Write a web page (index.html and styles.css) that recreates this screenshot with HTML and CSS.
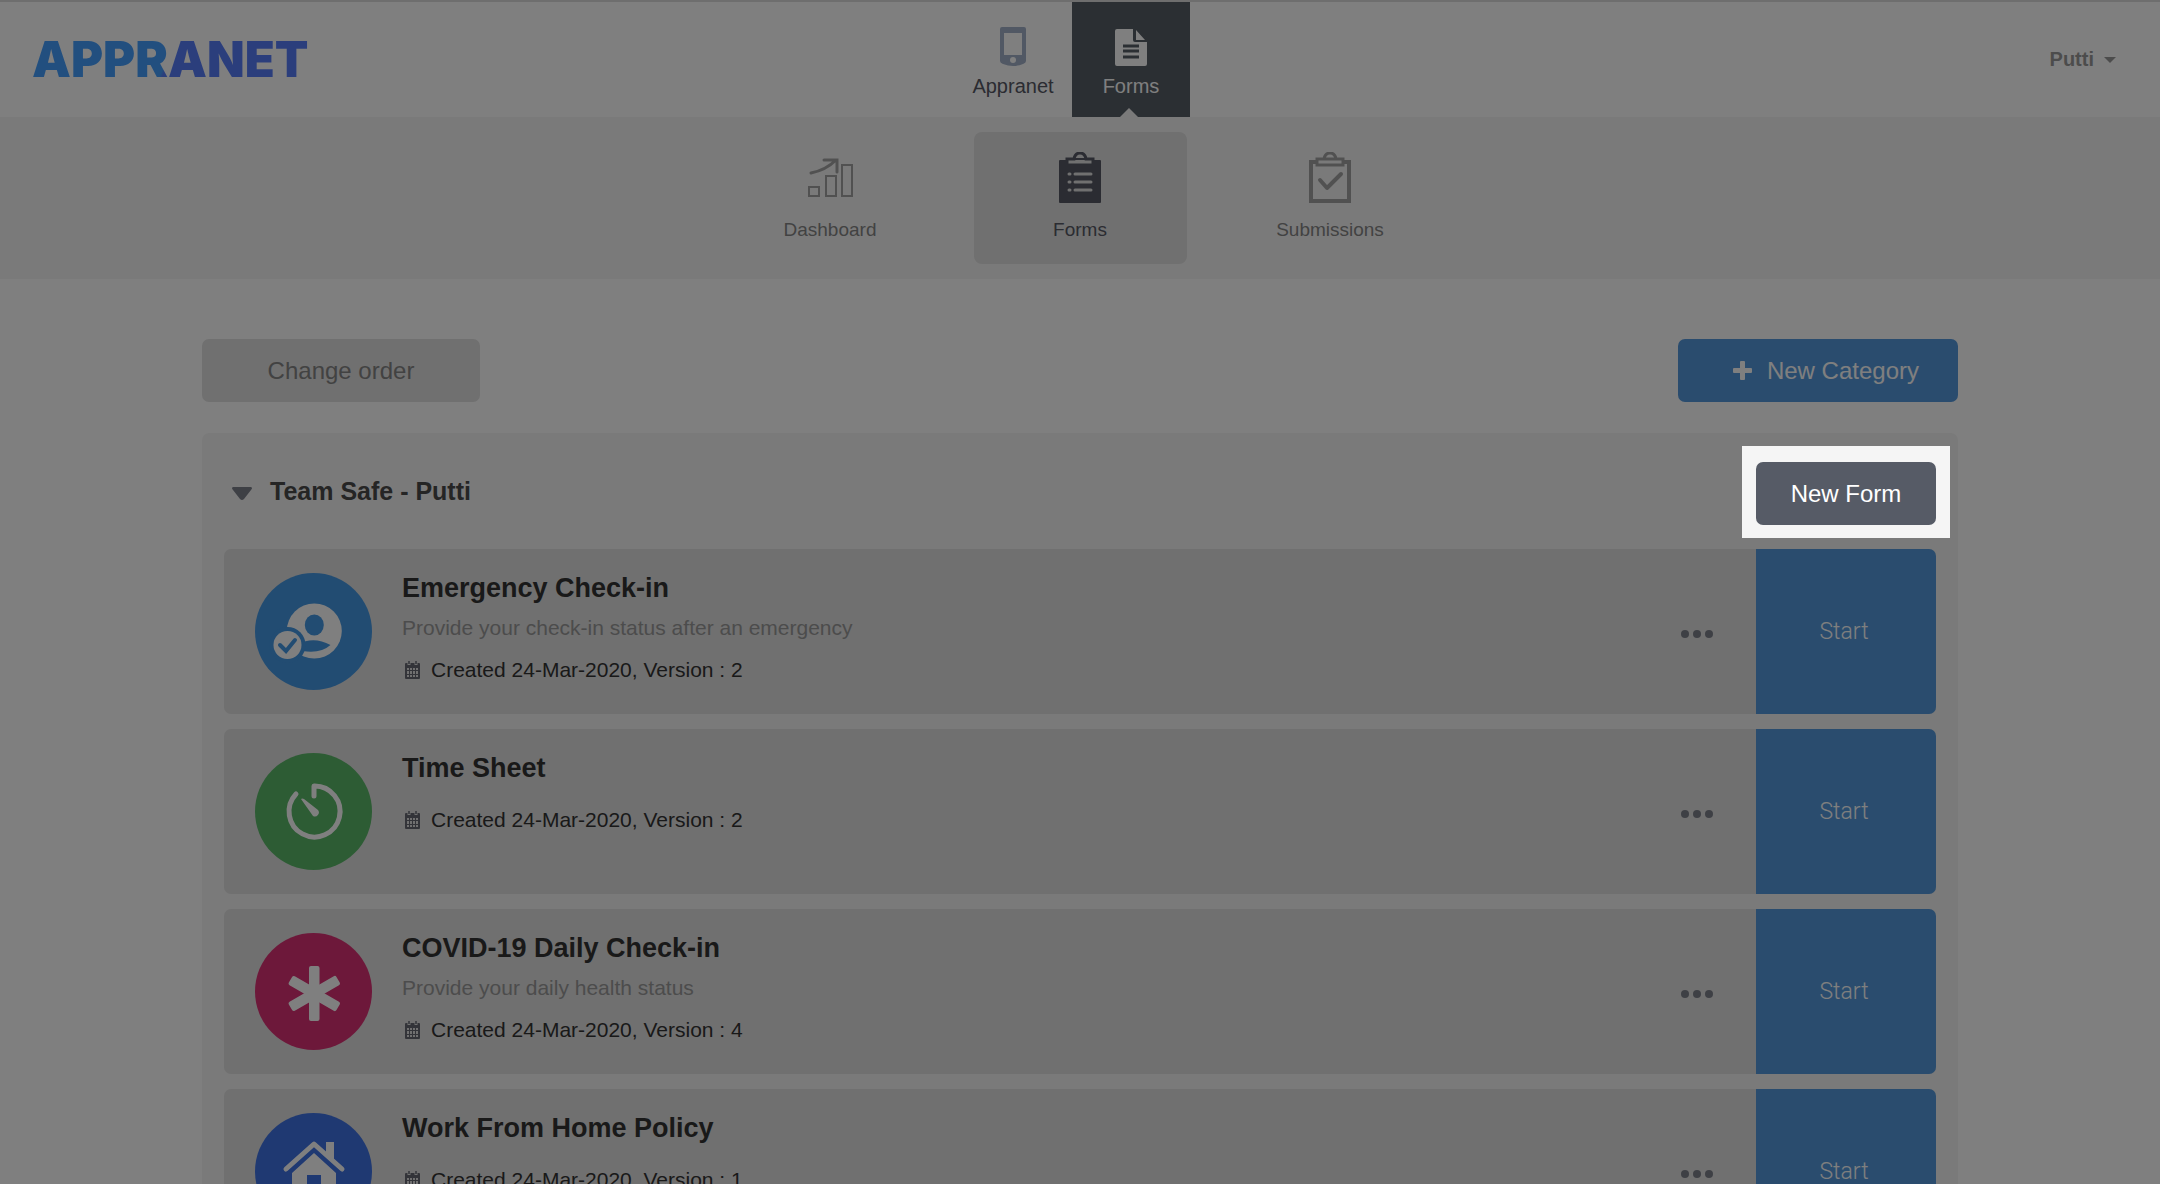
FILE: index.html
```html
<!DOCTYPE html>
<html lang="en">
<head>
    <meta charset="UTF-8">
    <meta name="viewport" content="width=device-width, initial-scale=1.0">
    <title>Appranet - Forms</title>
    <link rel="stylesheet" href="styles.css">
</head>
<body>
    <!-- shared icons -->
    <svg class="sprite" width="0" height="0">
        <symbol id="calendar" viewBox="0 0 15 18">
            <path fill="currentColor" fill-rule="evenodd" d="M1 2h13q1 0 1 1v14q0 1-1 1H1q-1 0-1-1V3q0-1 1-1zM2 7v2h2V7zm3 0v2h2V7zm3 0v2h2V7zm3 0v2h2V7zM2 10v3h2v-3zm3 0v3h2v-3zm3 0v3h2v-3zm3 0v3h2v-3zM2 14v2h2v-2zm3 0v2h2v-2zm3 0v2h2v-2zm3 0v2h2v-2z"/>
            <path stroke="#e0e0e0" stroke-width="3" d="M4 1v3M11 1v3"/>
            <path stroke="currentColor" stroke-width="1.5" d="M4 0v3M11 0v3"/>
        </symbol>
        <symbol id="dots" viewBox="0 0 32 8">
            <g fill="currentColor"><circle cx="4" cy="4" r="4"/><circle cx="16" cy="4" r="4"/><circle cx="28" cy="4" r="4"/></g>
        </symbol>
    </svg>

    <header class="header">
        <a href="#" class="logo">APPRANET</a>
        <nav class="apps">
            <a href="#" class="app">
                <svg width="26" height="39" viewBox="0 0 26 39">
                    <path fill="#a3b1c9" fill-rule="evenodd" d="M2 0h22q2 0 2 2v32q0 2-3 3-10 4-20 0-3-1-3-3V2q0-2 2-2zM4 6v22h18V6z"/>
                    <circle cx="13" cy="33" r="3" fill="#fff"/>
                </svg>
                <span>Appranet</span>
            </a>
            <a href="#" class="app active">
                <svg width="32" height="37" viewBox="0 0 32 37">
                    <path fill="#fff" d="M2 0h16v11q0 2 2 2h12v22q0 2-2 2H2q-2 0-2-2V2q0-2 2-2zM21 1l9 10h-9z"/>
                    <path stroke="#565e66" stroke-width="3" d="M8 17h16M8 22h16M8 28h16"/>
                </svg>
                <span>Forms</span>
            </a>
        </nav>
        <button type="button" class="user">Putti <span class="caret"></span></button>
    </header>

    <nav class="subnav">
        <a href="#" class="tab">
            <svg width="46" height="52" viewBox="0 0 46 52">
                <g fill="none" stroke="#a3a3a3" stroke-width="2">
                    <path d="M2 35h10v9H2zM19 24h10v20H19zM35 13h10v31H35z"/>
                    <path stroke-width="3" stroke-linecap="round" d="M4 21Q19 18 29 8M17 8h13v12"/>
                </g>
            </svg>
            <span>Dashboard</span>
        </a>
        <a href="#" class="tab active">
            <svg width="42" height="52" viewBox="0 0 42 52">
                <path fill="#565864" d="M1 8h40q1 0 1 1v41q0 1-1 1H1q-1 0-1-1V9q0-1 1-1z"/>
                <path fill="#e0e0e0" stroke="#565864" stroke-width="3" d="M8 7h7q1-6 6-6t6 6h7v6H8z"/>
                <path fill="none" stroke="#565864" stroke-width="2" d="M15 7h12"/>
                <path stroke="#e0e0e0" stroke-width="3" stroke-linecap="round" d="M10 22h1M16 22h16M10 30h1M16 30h16M10 38h1M16 38h16"/>
            </svg>
            <span>Forms</span>
        </a>
        <a href="#" class="tab">
            <svg width="42" height="52" viewBox="0 0 42 52">
                <g fill="none" stroke="#a3a3a3" stroke-width="4">
                    <path d="M8 10H2v39h38V10h-6"/>
                    <path stroke-width="3" d="M8 7h7q1-6 6-6t6 6h7v6H8zM15 7h12"/>
                    <path stroke-linecap="round" stroke-linejoin="round" d="M11 28l7 8 14-14"/>
                </g>
            </svg>
            <span>Submissions</span>
        </a>
    </nav>

    <main class="container">
        <div class="toolbar">
            <button type="button" class="btn btn-grey">Change order</button>
            <button type="button" class="btn btn-blue">
                <svg width="19" height="19" viewBox="0 0 19 19"><path fill="#fff" d="M8 0h3q1 0 1 1v6h6q1 0 1 1v3q0 1-1 1h-6v6q0 1-1 1H8q-1 0-1-1v-6H1q-1 0-1-1V8q0-1 1-1h6V1q0-1 1-1z"/></svg>
                New Category
            </button>
        </div>

        <section class="panel">
            <div class="panel-head">
                <svg width="20" height="13" viewBox="0 0 20 13"><path fill="#7d808b" d="M1 0h18q2 1 0 3l-7 9q-2 2-4 0L1 3Q-1 1 1 0z"/></svg>
                <h2>Team Safe - Putti</h2>
                <div class="spotlight">
                    <button type="button" class="btn btn-dark">New Form</button>
                </div>
            </div>

            <article class="card">
                <svg class="badge" viewBox="0 0 117 117">
                    <circle cx="58.5" cy="58.5" r="58.5" fill="#4498e4"/>
                    <circle cx="59.3" cy="58" r="27.5" fill="#fff"/>
                    <ellipse cx="59.3" cy="52" rx="9.5" ry="10.5" fill="#4498e4"/>
                    <path fill="#4498e4" d="M43 71q16-8 32.5 1-10 9-28 6z"/>
                    <circle cx="32.5" cy="72" r="18" fill="#4498e4"/>
                    <circle cx="32.5" cy="72" r="14" fill="#fff"/>
                    <path fill="none" stroke="#4498e4" stroke-width="4" stroke-linecap="round" d="M25 72l6 6 9-11"/>
                </svg>
                <div class="info">
                    <h3>Emergency Check-in</h3>
                    <p class="desc">Provide your check-in status after an emergency</p>
                    <p class="meta"><svg width="15" height="18"><use href="#calendar"/></svg>Created 24-Mar-2020, Version : 2</p>
                </div>
                <button type="button" class="more" aria-label="More"><svg width="32" height="8"><use href="#dots"/></svg></button>
                <button type="button" class="start">Start</button>
            </article>

            <article class="card">
                <svg class="badge" viewBox="0 0 117 117">
                    <circle cx="58.5" cy="58.5" r="58.5" fill="#5ab869"/>
                    <path fill="none" stroke="#fff" stroke-width="5" stroke-linecap="round" stroke-linejoin="round" d="M59 43V33A25.5 25.5 0 1 1 41 41"/>
                    <path fill="#fff" d="M46 46q1-1 3 0l14 11a4 4 0 0 1-5 6z"/>
                </svg>
                <div class="info">
                    <h3>Time Sheet</h3>
                    <p class="meta"><svg width="15" height="18"><use href="#calendar"/></svg>Created 24-Mar-2020, Version : 2</p>
                </div>
                <button type="button" class="more" aria-label="More"><svg width="32" height="8"><use href="#dots"/></svg></button>
                <button type="button" class="start">Start</button>
            </article>

            <article class="card">
                <svg class="badge" viewBox="0 0 117 117">
                    <circle cx="58.5" cy="58.5" r="58.5" fill="#da3074"/>
                    <g fill="#fff">
                        <rect x="54" y="33" width="10.5" height="55" rx="2"/>
                        <rect x="54" y="33" width="10.5" height="55" rx="2" transform="rotate(60 59.3 60.5)"/>
                        <rect x="54" y="33" width="10.5" height="55" rx="2" transform="rotate(-60 59.3 60.5)"/>
                    </g>
                </svg>
                <div class="info">
                    <h3>COVID-19 Daily Check-in</h3>
                    <p class="desc">Provide your daily health status</p>
                    <p class="meta"><svg width="15" height="18"><use href="#calendar"/></svg>Created 24-Mar-2020, Version : 4</p>
                </div>
                <button type="button" class="more" aria-label="More"><svg width="32" height="8"><use href="#dots"/></svg></button>
                <button type="button" class="start">Start</button>
            </article>

            <article class="card">
                <svg class="badge" viewBox="0 0 117 117">
                    <circle cx="58.5" cy="58.5" r="58.5" fill="#3e72e4"/>
                    <path fill="none" stroke="#fff" stroke-width="5" stroke-linecap="round" stroke-linejoin="round" d="M31 56l28-25 28 25"/>
                    <path fill="#fff" d="M71 29h8v19l-8-7zM59 40l22 20v26H66V62H52v24H37V60z"/>
                </svg>
                <div class="info">
                    <h3>Work From Home Policy</h3>
                    <p class="meta"><svg width="15" height="18"><use href="#calendar"/></svg>Created 24-Mar-2020, Version : 1</p>
                </div>
                <button type="button" class="more" aria-label="More"><svg width="32" height="8"><use href="#dots"/></svg></button>
                <button type="button" class="start">Start</button>
            </article>
        </section>
    </main>
</body>
</html>
```
FILE: styles.css
```css
* {
    box-sizing: border-box;
}
body {
    margin: 0;
    height: 100vh;
    overflow: hidden;
    background-color: #fff;
    color: #333;
    font-family: "Liberation Sans", Arial, sans-serif;
    font-size: 21px;
}
h2, h3, p {
    margin: 0;
}
a {
    text-decoration: none;
}
svg {
    display: block;
    flex-shrink: 0;
}
.sprite {
    position: absolute;
}
button {
    border: 0;
    margin: 0;
    padding: 0;
    background: none;
    font-family: inherit;
    cursor: pointer;
}

/* header */
.header {
    display: grid;
    grid-template-columns: 1fr auto 1fr;
    align-items: center;
    padding: 0 44px 0 28px;
    border-top: 2px solid #dcdcdc;
}
.logo {
    justify-self: start;
    margin-left: 4px;
    font-family: Inter, sans-serif;
    font-size: 49px;
    font-weight: 900;
    line-height: 60px;
    color: transparent;
    background: linear-gradient(115deg, #449eff 49%, #567cf8 50%);
    background-clip: text;
    -webkit-background-clip: text;
}
.apps {
    display: flex;
}
.app {
    position: relative;
    display: flex;
    flex-direction: column;
    align-items: center;
    justify-content: flex-end;
    gap: 8px;
    width: 118px;
    height: 115px;
    padding-bottom: 19px;
    color: #565864;
    font-size: 20px;
    line-height: 24px;
}
.app.active {
    background-color: #565e66;
    color: #fff;
}
.app.active::after {
    content: "";
    position: absolute;
    bottom: 0;
    left: 50%;
    margin-left: -11px;
    border: 9px solid transparent;
    border-top: 0;
    border-bottom-color: #f5f5f5;
}
.user {
    justify-self: end;
    display: flex;
    align-items: center;
    gap: 10px;
    color: #999;
    font-size: 20px;
    font-weight: bold;
}
.caret {
    border: 6px solid transparent;
    border-top-color: #999;
    border-bottom: 0;
}

/* sub navigation */
.subnav {
    display: flex;
    justify-content: center;
    gap: 37px;
    padding: 15px 0;
    background-color: #f5f5f5;
}
.tab {
    display: flex;
    flex-direction: column;
    align-items: center;
    gap: 14px;
    width: 213px;
    height: 132px;
    padding-top: 20px;
    border-radius: 8px;
    color: #858585;
    font-size: 19px;
    line-height: 24px;
}
.tab.active {
    background-color: #e0e0e0;
    color: #565864;
}

/* content */
.container {
    max-width: 1756px;
    margin: 0 auto;
    padding-top: 60px;
}
.toolbar {
    display: flex;
    justify-content: space-between;
    margin-bottom: 31px;
}
.btn {
    display: flex;
    align-items: center;
    justify-content: center;
    height: 63px;
    border-radius: 7px;
    color: #fff;
    font-size: 24px;
}
.btn-grey {
    width: 278px;
    background-color: #e0e0e0;
    color: #858585;
}
.btn-blue {
    gap: 15px;
    padding: 0 39px 0 55px;
    background-color: #5499dd;
}
.btn-dark {
    position: relative;
    width: 180px;
    background-color: #565b66;
}
.panel {
    padding: 29px 22px;
    border-radius: 7px;
    background-color: #f5f5f5;
}
.panel-head {
    display: flex;
    align-items: center;
    padding-left: 8px;
    margin-bottom: 24px;
}
.panel-head h2 {
    margin-left: 18px;
    padding-bottom: 5px;
    color: #4a4a4a;
    font-size: 25px;
    line-height: 30px;
}

/* dims everything except the highlighted button */
.spotlight {
    position: relative;
    z-index: 10;
    margin-left: auto;
}
.spotlight::before {
    content: "";
    position: absolute;
    inset: -16px -14px -13px;
    background-color: #f5f5f5;
    box-shadow: 0 0 0 3000px rgba(0, 0, 0, 0.5);
}

/* form rows */
.card {
    display: flex;
    height: 165px;
    margin-bottom: 15px;
    padding-left: 31px;
    border-radius: 7px;
    background-color: #e0e0e0;
    overflow: hidden;
}
.badge {
    width: 117px;
    height: 117px;
    margin-top: 24px;
}
.info {
    flex: 1;
    padding: 24px 0 0 30px;
}
.info h3 {
    font-size: 27px;
    line-height: 30px;
}
.desc {
    margin-top: 12px;
    color: #999;
    line-height: 26px;
}
.meta {
    display: flex;
    align-items: center;
    gap: 11px;
    margin-top: 24px;
    padding-left: 3px;
    line-height: 26px;
}
.meta svg {
    color: #666873;
}
.desc + .meta {
    margin-top: 16px;
}
.more {
    padding: 5px 43px 0;
    color: #7d808b;
}
.start {
    width: 180px;
    padding-right: 4px;
    background-color: #5499dd;
    color: #fff;
    font-family: Roboto, sans-serif;
    font-size: 23px;
    font-weight: 300;
}
```
